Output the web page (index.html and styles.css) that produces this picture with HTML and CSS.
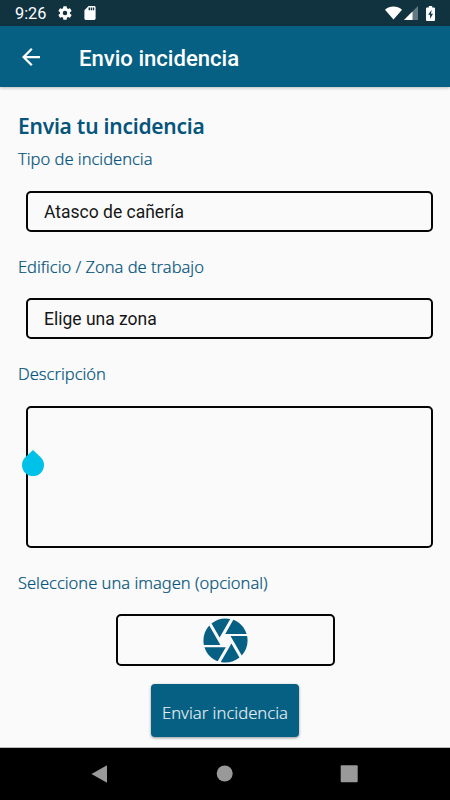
FILE: index.html
```html
<!DOCTYPE html>
<html lang="es">
<head>
<meta charset="utf-8">
<title>Envio incidencia</title>
<link rel="stylesheet" href="styles.css">
</head>
<body>
<div class="status">
  <span class="clock">9:26</span>
  <svg class="gear" viewBox="2 2 20 20"><path d="M19.14 12.94c.04-.3.06-.61.06-.94s-.02-.64-.07-.94l2.03-1.58a.49.49 0 0 0 .12-.61l-1.92-3.32a.49.49 0 0 0-.59-.22l-2.39.96a7 7 0 0 0-1.62-.94l-.36-2.54a.48.48 0 0 0-.48-.41h-3.84a.48.48 0 0 0-.47.41l-.36 2.54c-.59.24-1.13.57-1.62.94l-2.39-.96a.48.48 0 0 0-.59.22L2.74 8.87a.48.48 0 0 0 .12.61l2.03 1.58c-.05.3-.09.63-.09.94s.02.64.07.94l-2.03 1.58a.49.49 0 0 0-.12.61l1.92 3.32c.12.22.37.29.59.22l2.39-.96c.5.38 1.03.7 1.62.94l.36 2.54c.05.24.24.41.48.41h3.84c.24 0 .44-.17.47-.41l.36-2.54c.59-.24 1.13-.56 1.62-.94l2.39.96c.22.08.47 0 .59-.22l1.92-3.32a.48.48 0 0 0-.12-.61zM12 15.2a3.2 3.2 0 1 1 0-6.4 3.2 3.2 0 0 1 0 6.4z"/></svg>
  <svg class="sd" viewBox="4 2 16 20"><path d="M18 2h-8L4.020 8 4 20c0 1.100.9 2 2 2h12c1.100 0 2-.9 2-2V4c0-1.100-.9-2-2-2zm-6 6h-2V4h2zm3 0h-2V4h2zm3 0h-2V4h2z"/></svg>
  <svg class="wifi" viewBox="0 0 18 14"><path d="M0 3.500C5-1 13-1 18 3.500L9 14z"/></svg>
  <svg class="signal" viewBox="0 0 14 14"><path d="M0 14 14 0v14z" opacity=".35"/><path d="M0 14 8.500 5.500V14z"/></svg>
  <svg class="battery" viewBox="0 0 9 15"><path fill-rule="evenodd" d="M2.800 0h3.400v1.500H8q1 0 1 1V14q0 1-1 1H1q-1 0-1-1V2.500q0-1 1-1h1.800zM5.600 3.800 2.200 8.800h1.900v4L7 7.700H5z"/></svg>
</div>
<header class="appbar">
  <svg class="back" viewBox="4 4 16 16"><path d="M20 11H7.830l5.590-5.590L12 4l-8 8 8 8 1.410-1.410L7.830 13H20z"/></svg>
  <h1>Envio incidencia</h1>
</header>
<main>
  <h2>Envia tu incidencia</h2>
  <div class="label">Tipo de incidencia</div>
  <div class="field">Atasco de cañería</div>
  <div class="label">Edificio / Zona de trabajo</div>
  <div class="field zone">Elige una zona</div>
  <div class="label">Descripción</div>
  <div class="area">
    <svg class="handle" viewBox="0 0 22 26"><path d="M11 0 18.700 7.300A11 11 0 1 1 3.300 7.300z"/></svg>
  </div>
  <div class="label">Seleccione una imagen (opcional)</div>
  <div class="picker">
    <svg class="shutter" viewBox="0 0 24 24"><path d="M9.400 10.500l4.770-8.260C13.470 2.090 12.750 2 12 2c-2.400 0-4.600.85-6.320 2.250l3.660 6.350.06-.1zM21.540 9c-.92-2.920-3.150-5.260-6-6.340L11.880 9h9.660zm.26 1h-7.490l.29.5 4.760 8.250C21 16.970 22 14.610 22 12c0-.69-.07-1.350-.2-2zM8.540 12l-3.900-6.750C3.010 7.030 2 9.390 2 12c0 .69.07 1.350.2 2h7.490l-1.150-2zm-6.080 3c.92 2.920 3.150 5.260 6 6.340L12.120 15H2.460zm11.270 0l-3.900 6.760c.7.15 1.420.24 2.170.24 2.400 0 4.600-.85 6.320-2.250l-3.660-6.350-.93 1.600z"/></svg>
  </div>
  <div class="send">Enviar incidencia</div>
</main>
<nav class="navbar">
  <svg viewBox="0 0 18 18"><path d="M.5 9 16 .3v17.400z"/></svg>
  <svg viewBox="0 0 18 18"><circle cx="8.700" cy="8.500" r="8"/></svg>
  <svg viewBox="0 0 18 18"><rect x=".7" y=".3" width="17" height="17" rx="1"/></svg>
</nav>
</body>
</html>
```
FILE: styles.css
```css
* { box-sizing: border-box; }
body {
  margin: 0;
  width: 450px;
  height: 800px;
  overflow: hidden;
  display: flex;
  flex-direction: column;
  background: #fafafa;
  font-family: Roboto, sans-serif;
}
svg { display: block; flex: none; }
.status {
  height: 26px;
  display: flex;
  align-items: center;
  padding: 0 15px;
  background: #10333f;
  color: #fff;
  fill: #fff;
}
.clock { width: 43px; font-size: 16.300px; line-height: 26px; padding-top: 2px; }
.gear { width: 14px; height: 14px; }
.sd { width: 12px; height: 14px; margin-left: 12px; }
.wifi { width: 17px; height: 14px; margin-left: auto; }
.signal { width: 14px; height: 14px; margin-left: 2px; }
.battery { width: 9px; height: 15px; margin-left: 8px; }
.appbar {
  height: 61px;
  flex: none;
  display: flex;
  align-items: center;
  padding-left: 22px;
  background: #066083;
  color: #fff;
  box-shadow: 0 1px 3px rgba(0, 0, 0, .25);
}
.back { width: 18px; height: 18px; fill: #fff; }
h1 { margin: 2px 0 0 39px; font-size: 22.100px; line-height: 28px; font-weight: 500; }
main { height: 661px; flex: none; padding: 24px 18px 0; border-bottom: 1px solid #bbb; }
h2, .label { color: #06557c; font-family: "Noto Sans", sans-serif; white-space: nowrap; }
h2 { margin: 0; height: 32px; font-size: 21px; line-height: 31px; font-weight: 600; letter-spacing: -.24px; }
.label { height: 32px; font-size: 16.500px; line-height: 32px; font-weight: 300; -webkit-text-stroke: .2px #06557c; }
.field {
  width: 406.500px;
  height: 41px;
  margin: 16px 0 19px 8px;
  padding-left: 16px;
  border: 2px solid #050505;
  border-radius: 5px;
  color: #161616;
  font-size: 17.500px;
  line-height: 39px;
}
.zone { margin: 15px 0 19px 8px; line-height: 38px; }
.area {
  position: relative;
  width: 406.500px;
  height: 142px;
  margin: 16px 0 19px 8px;
  border: 2px solid #050505;
  border-radius: 5px;
}
.handle { position: absolute; left: -6.500px; top: 42px; width: 22px; height: 26px; fill: #00c2e9; }
.picker {
  width: 219px;
  height: 52px;
  margin: 15px 0 18px 98px;
  border: 2px solid #050505;
  border-radius: 5px;
  display: flex;
  align-items: center;
  justify-content: center;
}
.shutter { width: 53px; height: 53px; fill: #066083; }
.send {
  width: 148px;
  height: 53px;
  margin-left: 133px;
  padding: 2px 0 0 11px;
  border-radius: 4px;
  background: #066083;
  color: #e4edf1;
  font: 300 16.650px/53px "Noto Sans", sans-serif;
  -webkit-text-stroke: .15px #e4edf1;
  white-space: nowrap;
  box-shadow: 0 1px 3px rgba(0, 0, 0, .4);
}
.navbar {
  height: 52px;
  flex: none;
  display: flex;
  align-items: center;
  justify-content: space-between;
  padding: 0 92px 0 91px;
  background: #000;
  fill: #999;
}
.navbar svg { width: 18px; height: 18px; }
```
